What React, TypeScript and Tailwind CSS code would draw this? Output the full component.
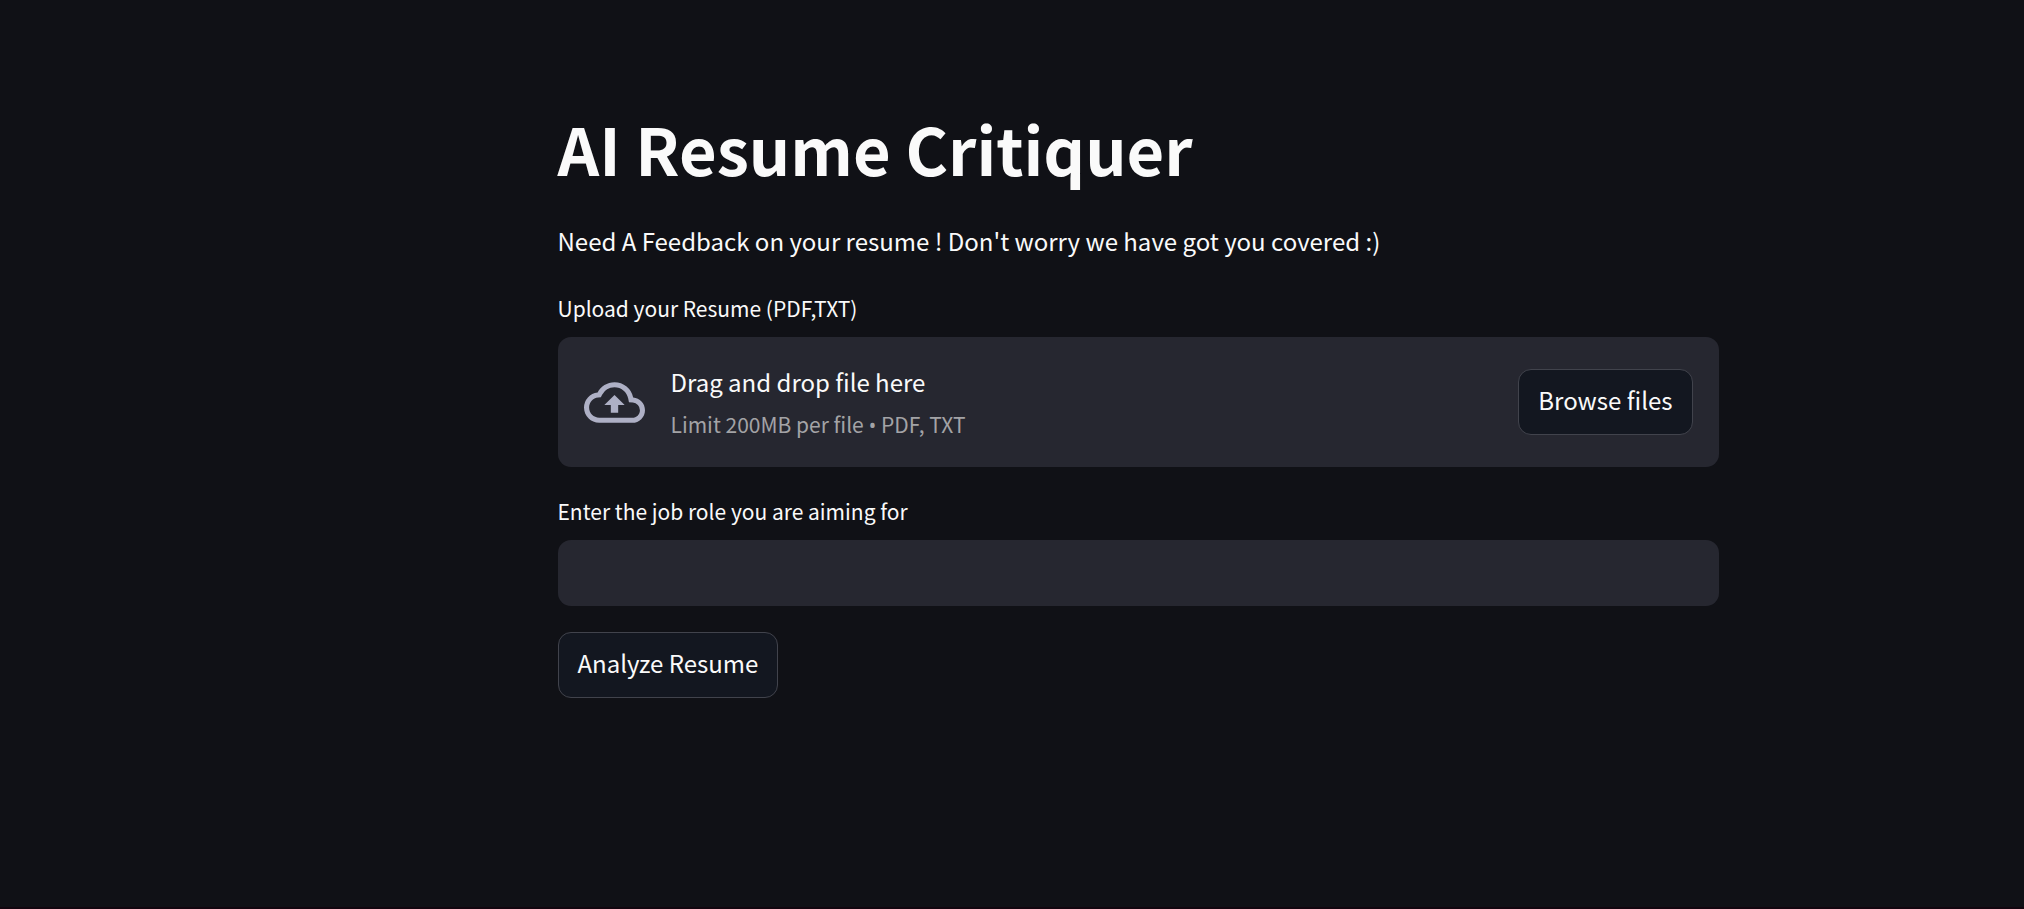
import { useRef, useState } from "react";

const buttonClass =
  "h-[66px] cursor-pointer whitespace-nowrap rounded-[13px] border border-[#41434c] bg-[#131720] px-[19px] pb-1 text-[24px] leading-[42px] text-[#fafafa] hover:border-[#ff4b4b] hover:text-[#ff4b4b]";

function CloudUploadIcon() {
  return (
    <svg viewBox="0 0 24 24" className="size-[61px] shrink-0 fill-[#aeb0c5]" aria-hidden="true">
      <path d="M19.35 10.04A7.49 7.49 0 0 0 12 4C9.11 4 6.6 5.64 5.35 8.04A5.994 5.994 0 0 0 0 14c0 3.31 2.69 6 6 6h13c2.76 0 5-2.24 5-5 0-2.64-2.05-4.78-4.65-4.96zM19 18H6c-2.21 0-4-1.79-4-4 0-2.05 1.53-3.76 3.56-3.97l1.07-.11.5-.95A5.469 5.469 0 0 1 12 6c2.62 0 4.88 1.86 5.39 4.43l.3 1.5 1.53.11A2.98 2.98 0 0 1 22 15c0 1.65-1.35 3-3 3zM8 13h2.55v3h2.9v-3H16l-4-4-4 4z" />
    </svg>
  );
}

function FileUploader() {
  const inputRef = useRef<HTMLInputElement>(null);
  return (
    <div className="flex flex-col gap-[11px]">
      <label htmlFor="resume" className="text-[21px] leading-[36px]">
        Upload your Resume (PDF,TXT)
      </label>
      <input ref={inputRef} id="resume" type="file" accept=".pdf,.txt" className="hidden" />
      <section className="flex min-h-[130px] items-center gap-[26px] rounded-[13px] bg-[#262730] px-[26px]">
        <CloudUploadIcon />
        <div className="flex flex-1 flex-col pt-0.5">
          <span className="text-[24px] leading-[42px]">Drag and drop file here</span>
          <span className="text-[21px] leading-[42px] text-[#a3a3a6]">
            Limit 200MB per file <span className="font-['Open_Sans',sans-serif]">•</span> PDF, TXT
          </span>
        </div>
        <button type="button" className={buttonClass} onClick={() => inputRef.current?.click()}>
          Browse files
        </button>
      </section>
    </div>
  );
}

export default function App() {
  const [role, setRole] = useState("");
  return (
    <div className="min-h-screen border-b-2 border-[#12060f] bg-[#101116] font-['Noto_Sans_CJK_SC',sans-serif] text-[#fafafa] lg:pl-[252px]">
      <main className="mx-auto flex max-w-[1161px] flex-col gap-[26px] pt-[104px] pb-20">
        <header className="flex flex-col gap-[28px] pb-0.5">
          <h1 className="text-[65px] leading-[88px] font-bold">AI Resume Critiquer</h1>
          <p className="text-[24px] leading-[42px]">
            Need A Feedback on your resume ! Don't worry we have got you covered :)
          </p>
        </header>
        <FileUploader />
        <div className="flex flex-col gap-[11px]">
          <label htmlFor="role" className="text-[21px] leading-[36px]">
            Enter the job role you are aiming for
          </label>
          <input
            id="role"
            type="text"
            value={role}
            onChange={(e) => setRole(e.target.value)}
            className="h-[66px] w-full rounded-[13px] bg-[#262730] px-5 text-[24px] outline-none focus:ring-1 focus:ring-[#ff4b4b]"
          />
        </div>
        <button type="button" className={`${buttonClass} self-start`}>
          Analyze Resume
        </button>
      </main>
    </div>
  );
}
